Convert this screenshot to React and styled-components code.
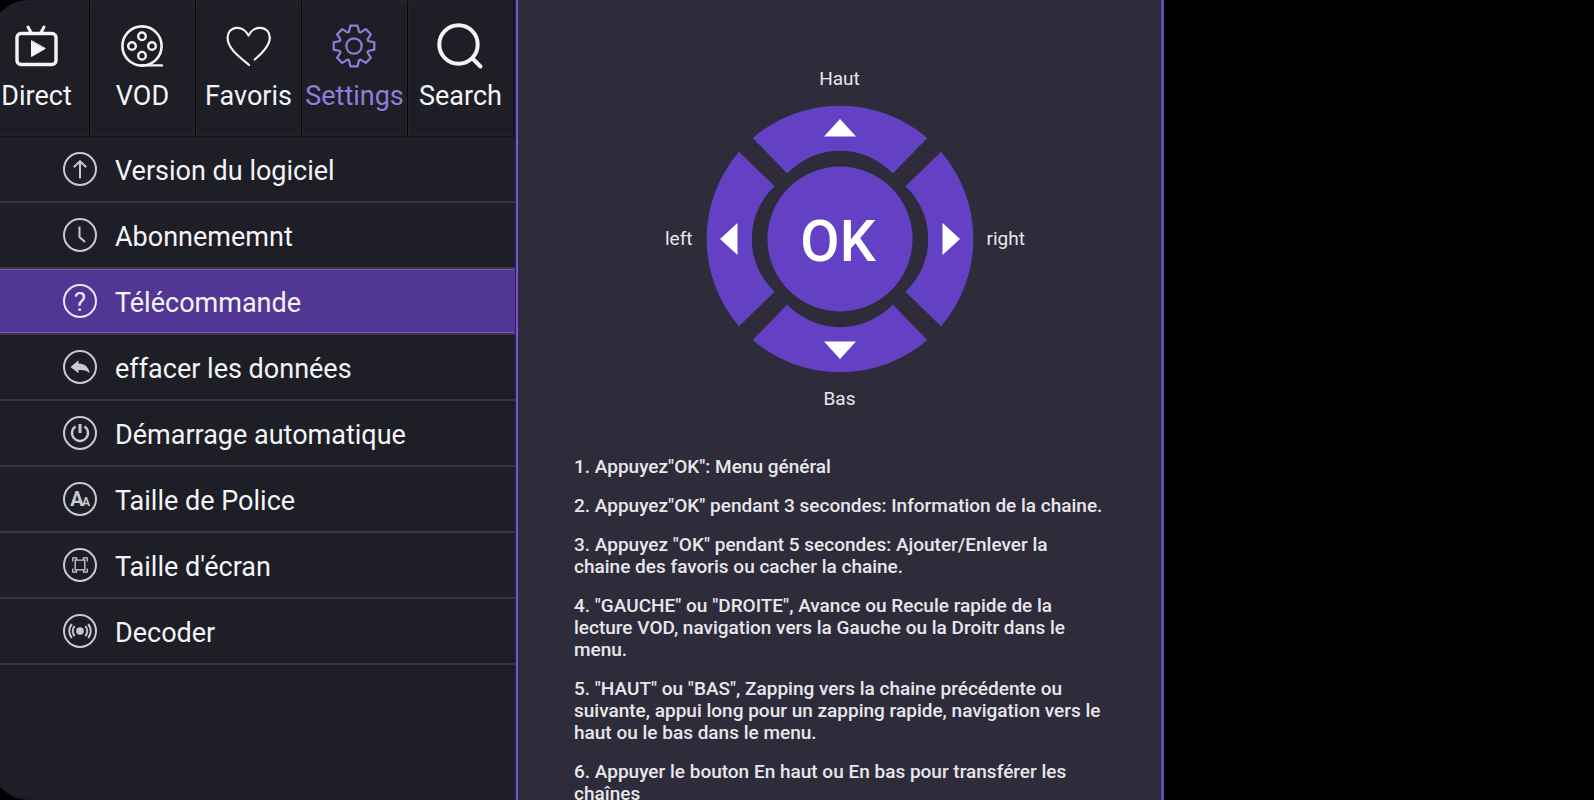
import React, { useState } from "react";
import styled, { createGlobalStyle } from "styled-components";

const IconText = styled.text`
  fill: currentColor;
  stroke: none;
  font-size: ${({ $size }) => $size}px;
  font-weight: ${({ $weight }) => $weight};
  text-anchor: middle;
`;

const steps = [
  '1. Appuyez"OK": Menu général',
  '2. Appuyez"OK" pendant 3 secondes: Information de la chaine.',
  '3. Appuyez "OK" pendant 5 secondes: Ajouter/Enlever la chaine des favoris ou cacher la chaine.',
  '4. "GAUCHE" ou "DROITE", Avance ou Recule rapide de la lecture VOD, navigation vers la Gauche ou la Droitr dans le menu.',
  '5. "HAUT" ou "BAS", Zapping vers la chaine précédente ou suivante, appui long pour un zapping rapide, navigation vers le haut ou le bas dans le menu.',
  "6. Appuyer le bouton En haut ou En bas pour transférer les chaînes",
];

// Outline of the settings gear: 8 teeth around (23, 24)
const gearPath = () => {
  const corners = [
    [-5, -14.2],
    [-3.6, -20.3],
    [3.6, -20.3],
    [5, -14.2],
  ];
  const points = [];
  for (let i = 0; i < 8; i++) {
    const a = (i * Math.PI) / 4;
    corners.forEach(([x, y]) => {
      const px = 23 + x * Math.cos(a) - y * Math.sin(a);
      const py = 24 + x * Math.sin(a) + y * Math.cos(a);
      points.push(`${px.toFixed(2)} ${py.toFixed(2)}`);
    });
  }
  return `M${points.join("L")}Z`;
};

const tabs = [
  {
    name: "Direct",
    icon: (
      <>
        <rect x="4" y="11.5" width="39" height="31" rx="4" strokeWidth="3.4" />
        <path d="M15 5l3 5.500M31 5l-3 5.500" strokeWidth="3" />
        <path d="M18.500 19v15.500l13.500-7.800z" fill="currentColor" strokeWidth="1" />
      </>
    ),
  },
  {
    name: "VOD",
    icon: (
      <>
        <circle cx="23" cy="24" r="19.6" strokeWidth="2.6" />
        <circle cx="23" cy="14.3" r="3.8" strokeWidth="2.4" />
        <circle cx="13" cy="24" r="3.8" strokeWidth="2.4" />
        <circle cx="33" cy="24" r="3.8" strokeWidth="2.4" />
        <circle cx="23" cy="33.7" r="3.8" strokeWidth="2.4" />
        <path d="M23 43.400H43" strokeWidth="2.4" />
      </>
    ),
  },
  {
    name: "Favoris",
    icon: (
      <path
        d="M24 43C14 34.500 2.600 26.500 2.600 15.800C2.600 4 18 2 23.500 13.500C29 2 44.800 4 44.800 15.800C44.800 24 37.500 31 29.700 37.500"
        strokeWidth="2.2"
      />
    ),
  },
  {
    name: "Settings",
    icon: (
      <>
        <path d={gearPath()} strokeWidth="2.2" />
        <circle cx="23" cy="24" r="7.7" strokeWidth="2.2" />
      </>
    ),
  },
  {
    name: "Search",
    icon: (
      <>
        <circle cx="21.500" cy="22.500" r="19.2" strokeWidth="4" />
        <path d="M36 37l7.500 7.500" strokeWidth="4" />
      </>
    ),
  },
];

const menu = [
  {
    name: "Version du logiciel",
    icon: <path d="M0 9.500V-7.500M-6.200-1.800L0-7.800L6.200-1.800" />,
  },
  {
    name: "Abonnememnt",
    icon: <path d="M-0.500-8.500V2L5 7" />,
  },
  {
    name: "Télécommande",
    icon: (
      <IconText y="9.5" $size={26} $weight={400}>
        ?
      </IconText>
    ),
  },
  {
    name: "effacer les données",
    icon: (
      <path
        d="M-9.500 0L-1.500-6.800V-3.400C5-3.200 8.500 0 9.800 6.200C7 3.400 4 2.800-1.500 3V6.200Z"
        fill="currentColor"
        stroke="none"
      />
    ),
  },
  {
    name: "Démarrage automatique",
    icon: (
      <>
        <path d="M-4.500-6.600A8 8 0 1 0 4.500-6.600" strokeWidth="2.4" />
        <path d="M0-9V0" strokeWidth="3" />
      </>
    ),
  },
  {
    name: "Taille de Police",
    icon: (
      <>
        <IconText x="-3" y="7" $size={20} $weight={700}>
          A
        </IconText>
        <IconText x="6" y="7" $size={12} $weight={700}>
          A
        </IconText>
      </>
    ),
  },
  {
    name: "Taille d'écran",
    icon: (
      <path
        d="M-4.800-4.800H4.800V4.800H-4.800ZM-7.200-3.500V-7.200H-3.500V-4.800M7.200-3.500V-7.200H3.500V-4.800M-7.200 3.500V7.200H-3.500V4.800M7.200 3.500V7.200H3.500V4.800"
        strokeWidth="1.3"
      />
    ),
  },
  {
    name: "Decoder",
    icon: (
      <>
        <circle r="3.8" fill="currentColor" stroke="none" />
        <path d="M-5.400-5A8 8 0 0 0-5.400 5M5.400-5A8 8 0 0 1 5.400 5M-8.200-7A11 11 0 0 0-8.200 7M8.200-7A11 11 0 0 1 8.200 7" />
      </>
    ),
  },
];

const Remote = () => (
  <RemoteGrid>
    <Label $area="up">Haut</Label>
    <Label $area="left">left</Label>
    <Pad viewBox="-135 -135 270 270" role="img" aria-label="Télécommande">
      {[0, 90, 180, 270].map((angle) => (
        <g key={angle} transform={`rotate(${angle})`}>
          <path
            d="M-87.300-101A134 134 0 0 1 87.300-101L52.700-65.500A72.500 72.500 0 0 0-52.700-65.500Z"
            fill="#6441c4"
          />
          <path d="M-16-102.500L0-120L16-102.500Z" fill="#fff" />
        </g>
      ))}
      <circle r="72.5" fill="#6441c4" />
      <PadText x="-2" y="22">
        OK
      </PadText>
    </Pad>
    <Label $area="right">right</Label>
    <Label $area="down">Bas</Label>
  </RemoteGrid>
);

const App = () => {
  const [tab, setTab] = useState("Settings");
  const [item, setItem] = useState("Télécommande");

  return (
    <>
      <GlobalStyle />
      <Screen>
        <Sidebar>
          {/* Top tabs */}
          <Tabs>
            {tabs.map(({ name, icon }) => (
              <Tab key={name} $active={name === tab} onClick={() => setTab(name)}>
                <TabIcon viewBox="0 0 48 48" aria-hidden="true">
                  {icon}
                </TabIcon>
                {name}
              </Tab>
            ))}
          </Tabs>

          {/* Settings menu */}
          <Menu>
            {menu.map(({ name, icon }) => (
              <li key={name}>
                <MenuItem $active={name === item} onClick={() => setItem(name)}>
                  <MenuIcon $active={name === item} viewBox="-17 -17 34 34" aria-hidden="true">
                    <circle r="16" />
                    {icon}
                  </MenuIcon>
                  <MenuName>{name}</MenuName>
                </MenuItem>
              </li>
            ))}
          </Menu>
        </Sidebar>

        <Content>
          <Remote />
          <Steps>
            {steps.map((step) => (
              <p key={step}>{step}</p>
            ))}
          </Steps>
        </Content>
      </Screen>
    </>
  );
};

export default App;

// Styled Components
const GlobalStyle = createGlobalStyle`
  * {
    box-sizing: border-box;
  }

  body {
    margin: 0;
    background: #000;
    color: #f4f4f6;
    font-family: Roboto, "Liberation Sans", sans-serif;
    overflow: hidden;
  }

  button {
    font: inherit;
    color: inherit;
    border: none;
    cursor: pointer;
  }
`;

// The video plane keeps the last column of the screen
const Screen = styled.div`
  display: grid;
  grid-template-columns: minmax(0, 518fr) minmax(0, 646fr) minmax(0, 430fr);
  height: 100vh;
  overflow: hidden;
`;

// Sidebar
const Sidebar = styled.aside`
  margin-left: -11px;
  padding: 1px 0 0 11px;
  background: #1e1e27;
  border-right: 2px solid #7459c6;
  border-radius: 41px 0 0 41px;
  overflow: hidden;
  box-shadow: inset -1px 0 0 #2c1a66;
`;

const Tabs = styled.nav`
  display: flex;
  justify-content: flex-end;
  padding-right: 2px;
  border-bottom: 1px solid #15151c;
`;

const Tab = styled.button`
  display: flex;
  flex: 0 0 106px;
  flex-direction: column;
  align-items: center;
  gap: 10px;
  height: 135px;
  padding: 21px 0 0;
  background: #1e1e27;
  border-right: 1px solid #050508;
  box-shadow: inset 0 0 0 1px #24242d;
  color: ${({ $active }) => ($active ? "#917cda" : "#f4f4f6")};
  font-size: 27px;
  line-height: 32px;
`;

const TabIcon = styled.svg`
  width: 48px;
  height: 48px;
  fill: none;
  stroke: currentColor;
  stroke-linecap: round;
  stroke-linejoin: round;
`;

const Menu = styled.ul`
  margin: 0;
  padding: 0 1px 0 0;
  list-style: none;
`;

const MenuItem = styled.button`
  display: flex;
  align-items: center;
  gap: 18px;
  width: 100%;
  height: 66px;
  padding: 0 0 0 63px;
  background: ${({ $active }) => ($active ? "#523696" : "none")};
  border-bottom: 2px solid ${({ $active }) => ($active ? "#3e3161" : "#383843")};
  box-shadow: ${({ $active }) =>
    $active ? "inset 0 1px 0 #725bab, inset 0 -1px 0 #725bab" : "none"};
  font-size: 27px;
  line-height: 32px;
  white-space: nowrap;
`;

const MenuName = styled.span`
  padding-top: 3px;
`;

const MenuIcon = styled.svg`
  flex: none;
  width: 34px;
  height: 34px;
  color: ${({ $active }) => ($active ? "#ece6f8" : "#cac8d2")};
  fill: none;
  stroke: currentColor;
  stroke-width: 2;
`;

// Content
const Content = styled.main`
  padding: 68px 56px 0;
  background: #2e2c3a;
  border-right: 3px solid #6449b4;
  color: #e8e7ec;
  overflow: hidden;
  font-size: 19px;
  font-weight: 500;
  line-height: 22px;
`;

const RemoteGrid = styled.div`
  display: grid;
  grid-template-areas:
    ". up ."
    "left pad right"
    ". down .";
  grid-template-columns: 1fr auto 1fr;
  align-items: center;
  gap: 14px 12px;
`;

const Label = styled.span`
  grid-area: ${({ $area }) => $area};
  justify-self: ${({ $area }) =>
    ({ left: "end", right: "start" })[$area] || "center"};
  font-weight: 400;
`;

const Pad = styled.svg`
  grid-area: pad;
  width: 270px;
  height: 270px;
`;

const PadText = styled.text`
  fill: #fff;
  font-size: 57px;
  text-anchor: middle;
`;

const Steps = styled.section`
  margin-top: 46px;

  p {
    margin: 0 0 17px;
  }
`;
